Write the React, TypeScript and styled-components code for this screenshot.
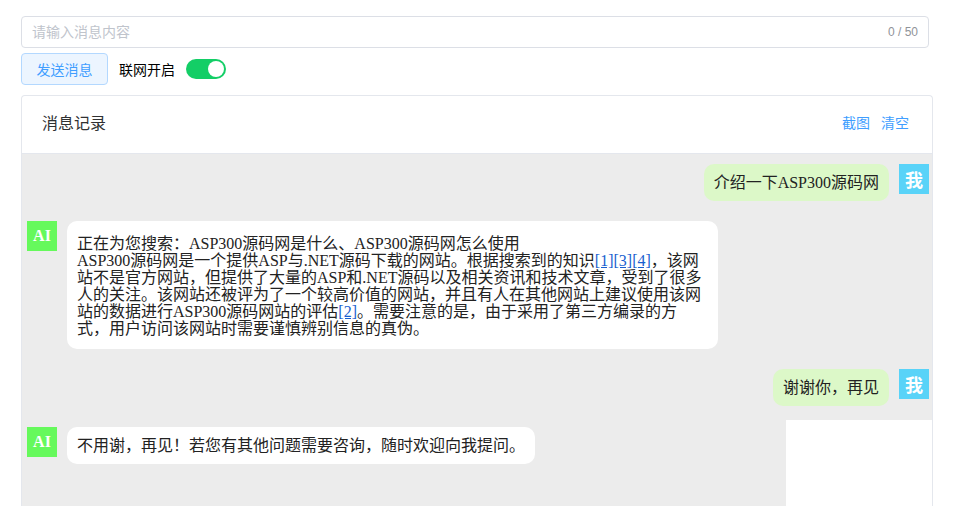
import React from "react";
import styled, { createGlobalStyle } from "styled-components";

const GlobalStyle = createGlobalStyle`
  html, body { margin: 0; padding: 0; background: #fff; }
  body { font-family: "Liberation Sans", "Noto Sans CJK SC", sans-serif; }
  * { box-sizing: border-box; }
`;

const Page = styled.div`
  padding: 16px 34px 0 21px;
  display: flex;
  flex-direction: column;
`;

const InputBox = styled.div`
  width: 908px;
  height: 32px;
  border: 1px solid #dcdfe6;
  border-radius: 4px;
  display: flex;
  align-items: center;
  padding: 0 10px 0 10px;
`;

const TextInput = styled.input`
  flex: 1;
  border: none;
  outline: none;
  font-size: 14px;
  font-family: "Liberation Sans", "Noto Sans CJK SC", sans-serif;
  color: #606266;
  padding: 0;
  background: transparent;
  &::placeholder { color: #c0c4cc; }
`;

const Counter = styled.span`
  font-size: 12px;
  color: #909399;
`;

const Controls = styled.div`
  display: flex;
  align-items: center;
  margin-top: 5px;
  gap: 11px;
`;

const SendButton = styled.button`
  height: 32px;
  width: 87px;
  padding: 0;
  border: 1px solid #b3d8ff;
  background: #ecf5ff;
  color: #409eff;
  border-radius: 4px;
  font-size: 14px;
  font-family: "Liberation Sans", "Noto Sans CJK SC", sans-serif;
`;

const Label = styled.span`
  font-size: 14px;
  color: #000;
`;

const Switch = styled.span`
  position: relative;
  display: inline-block;
  width: 40px;
  height: 20px;
  border-radius: 10px;
  background: #13ce66;
  &::after {
    content: "";
    position: absolute;
    top: 2px;
    right: 2px;
    width: 16px;
    height: 16px;
    border-radius: 50%;
    background: #fff;
  }
`;

const Card = styled.div`
  margin-top: 10px;
  width: 912px;
  border: 1px solid #e4e7ed;
  border-bottom: none;
  border-radius: 4px 4px 0 0;
  display: flex;
  flex-direction: column;
`;

const CardHeader = styled.div`
  display: flex;
  align-items: center;
  justify-content: space-between;
  height: 58px;
  padding: 0 23px 5px 20px;
  border-bottom: 1px solid #e4e7ed;
`;

const Title = styled.span`
  font-size: 16px;
  color: #303133;
`;

const Actions = styled.div`
  display: flex;
  gap: 11px;
`;

const ActionLink = styled.span`
  font-size: 14px;
  color: #409eff;
`;

const Section = styled.div<{ $tail?: boolean }>`
  background: #ececec;
  width: ${(p) => (p.$tail ? "764px" : "100%")};
  padding: ${(p) => (p.$tail ? "0 0 60px" : "0 0 4px")};
  display: flex;
  flex-direction: column;
`;

const Row = styled.div<{ $mine?: boolean; $top?: number }>`
  display: flex;
  flex-direction: ${(p) => (p.$mine ? "row-reverse" : "row")};
  align-items: flex-start;
  gap: 10px;
  padding: ${(p) => p.$top ?? 10}px 3px 10px 5px;
`;

const Avatar = styled.div<{ $mine?: boolean }>`
  flex: none;
  width: 30px;
  height: 30px;
  background: ${(p) => (p.$mine ? "#59d3f8" : "#66f95c")};
  color: #fff;
  font-family: "Liberation Serif", "Noto Sans CJK SC", serif;
  font-weight: bold;
  font-size: ${(p) => (p.$mine ? "18px" : "16px")};
  display: flex;
  align-items: center;
  justify-content: center;
`;

const Bubble = styled.div<{ $mine?: boolean; $tall?: boolean }>`
  max-width: 651px;
  background: ${(p) => (p.$mine ? "#dcf8c8" : "#fff")};
  border-radius: 10px;
  padding: ${(p) => (p.$tall ? "14px 10px 12px" : "10px")};
  font-family: "Liberation Serif", "Noto Sans CJK SC", serif;
  font-size: 16px;
  line-height: 17px;
  color: #222;
`;

const Ref = styled.a`
  color: #1a5fcf;
  text-decoration: underline;
`;

export default function App() {
  return (
    <>
      <GlobalStyle />
      <Page>
        <InputBox>
          <TextInput placeholder="请输入消息内容" />
          <Counter>0 / 50</Counter>
        </InputBox>
        <Controls>
          <SendButton>发送消息</SendButton>
          <Label>联网开启</Label>
          <Switch />
        </Controls>
        <Card>
          <CardHeader>
            <Title>消息记录</Title>
            <Actions>
              <ActionLink>截图</ActionLink>
              <ActionLink>清空</ActionLink>
            </Actions>
          </CardHeader>
          <Section>
            <Row $mine>
              <Avatar $mine>我</Avatar>
              <Bubble $mine>介绍一下ASP300源码网</Bubble>
            </Row>
            <Row>
              <Avatar>AI</Avatar>
              <Bubble $tall>
                正在为您搜索：ASP300源码网是什么、ASP300源码网怎么使用
                <br />
                ASP300源码网是一个提供ASP与.NET源码下载的网站。根据搜索到的知识
                <Ref>[1]</Ref>
                <Ref>[3]</Ref>
                <Ref>[4]</Ref>
                ，该网站不是官方网站，但提供了大量的ASP和.NET源码以及相关资讯和技术文章，受到了很多人的关注。该网站还被评为了一个较高价值的网站，并且有人在其他网站上建议使用该网站的数据进行ASP300源码网站的评估
                <Ref>[2]</Ref>
                。需要注意的是，由于采用了第三方编录的方式，用户访问该网站时需要谨慎辨别信息的真伪。
              </Bubble>
            </Row>
            <Row $mine>
              <Avatar $mine>我</Avatar>
              <Bubble $mine>谢谢你，再见</Bubble>
            </Row>
          </Section>
          <Section $tail>
            <Row $top={7}>
              <Avatar>AI</Avatar>
              <Bubble>不用谢，再见！若您有其他问题需要咨询，随时欢迎向我提问。</Bubble>
            </Row>
          </Section>
        </Card>
      </Page>
    </>
  );
}
